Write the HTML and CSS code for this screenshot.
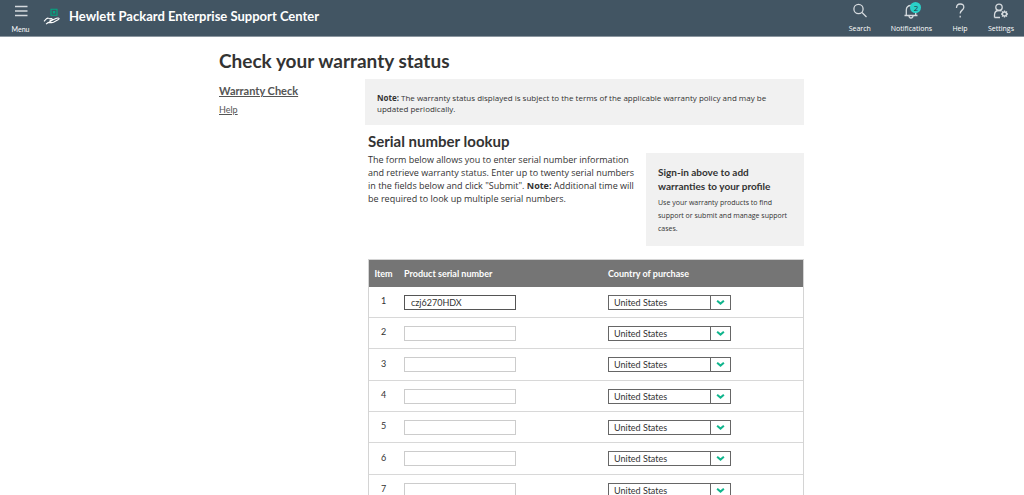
FILE: index.html
```
<!DOCTYPE html>
<html lang="en">
<head>
<meta charset="utf-8">
<title>Check your warranty status</title>
<link rel="stylesheet" href="styles.css">
</head>
<body>
<header class="topbar">
  <button class="tool menu" type="button">
    <svg class="tool-icon" viewBox="0 0 16 16"><path d="M2 3.500h12.500M2 8h12.500M2 12.500h12.500"/></svg>
    <span>Menu</span>
  </button>
  <a class="brand" href="#">
    <svg class="brand-icon" viewBox="0 0 17 17">
      <path class="brand-box" d="M8 1.200h6v6H8zM10.400 3.500h1.300v1.400h-1.300z"/>
      <path class="brand-hand" d="M1 13.300l2.500-2.600q1-.8 2-.5l3 .3q1.300.4.500 1.600H6.500M9.500 12l4-1.700q2-.7 2.500 0t-1 1.400l-4.500 2.500q-1 .5-2 .4H5l-2 1.500z"/>
    </svg>
    <span>Hewlett Packard Enterprise Support Center</span>
  </a>
  <nav class="tools">
    <button class="tool" type="button">
      <svg class="tool-icon" viewBox="0 0 16 16"><circle cx="6.500" cy="6" r="4.600"/><path d="M10 9.500l4.500 4.500"/></svg>
      <span>Search</span>
    </button>
    <button class="tool" type="button">
      <svg class="tool-icon" viewBox="0 0 16 16"><path d="M1.500 12.500h13M3.300 12.500V7q0-4.500 4.700-4.500T12.700 7v5.500M6 12.500q0 2.500 2 2.500t2-2.500"/></svg>
      <span>Notifications</span>
      <span class="badge">2</span>
    </button>
    <button class="tool" type="button">
      <svg class="tool-icon" viewBox="0 0 16 16"><path d="M4.500 5q0-4 3.700-4t3.600 3.300c0 3-3.600 2.700-3.600 6.200M8.200 12.800v1.700"/></svg>
      <span>Help</span>
    </button>
    <button class="tool" type="button">
      <svg class="tool-icon" viewBox="0 0 16 16"><circle cx="6" cy="4.300" r="3.200"/><path d="M1.500 14.500v-2.500q0-4.500 4.500-4.500 1.500 0 2.500.5M1.500 14.500H7"/><circle cx="11.500" cy="11" r="2"/><path d="M11.500 7.500v1.500M11.500 13v1.500M8 11h1.500M13.500 11H15M9 8.500l1 1M13 12.500l1 1M14 8.500l-1 1M10 12.500l-1 1"/></svg>
      <span>Settings</span>
    </button>
  </nav>
</header>

<div class="page">
  <h1>Check your warranty status</h1>
  <div class="columns">
    <nav class="side">
      <a class="current" href="#">Warranty Check</a>
      <a href="#">Help</a>
    </nav>
    <main class="content">
      <p class="note"><b>Note:</b> The warranty status displayed is subject to the terms of the applicable warranty policy and may be<br>updated periodically.</p>
      <div class="lookup">
        <div class="intro">
          <section class="intro-text">
            <h2>Serial number lookup</h2>
            <p>The form below allows you to enter serial number information<br>and retrieve warranty status. Enter up to twenty serial numbers<br>in the fields below and click "Submit". <b>Note:</b> Additional time will<br>be required to look up multiple serial numbers.</p>
          </section>
          <aside class="signin">
            <h3>Sign-in above to add<br>warranties to your profile</h3>
            <p>Use your warranty products to find<br>support or submit and manage support<br>cases.</p>
          </aside>
        </div>
        <table class="serials">
          <thead><tr><th class="item">Item</th><th class="serial">Product serial number</th><th>Country of purchase</th></tr></thead>
          <tbody>
            <tr><td class="item">1</td><td><input class="field" aria-label="Product serial number 1" value="czj6270HDX" autofocus></td><td><span class="pick"><select aria-label="Country of purchase 1"><option>United States</option></select><svg viewBox="0 0 8 6"><path d="M1 1.500l3 2.500 3-2.500"/></svg></span></td></tr>
            <tr><td class="item">2</td><td><input class="field" aria-label="Product serial number 2"></td><td><span class="pick"><select aria-label="Country of purchase 2"><option>United States</option></select><svg viewBox="0 0 8 6"><path d="M1 1.500l3 2.500 3-2.500"/></svg></span></td></tr>
            <tr><td class="item">3</td><td><input class="field" aria-label="Product serial number 3"></td><td><span class="pick"><select aria-label="Country of purchase 3"><option>United States</option></select><svg viewBox="0 0 8 6"><path d="M1 1.500l3 2.500 3-2.500"/></svg></span></td></tr>
            <tr><td class="item">4</td><td><input class="field" aria-label="Product serial number 4"></td><td><span class="pick"><select aria-label="Country of purchase 4"><option>United States</option></select><svg viewBox="0 0 8 6"><path d="M1 1.500l3 2.500 3-2.500"/></svg></span></td></tr>
            <tr><td class="item">5</td><td><input class="field" aria-label="Product serial number 5"></td><td><span class="pick"><select aria-label="Country of purchase 5"><option>United States</option></select><svg viewBox="0 0 8 6"><path d="M1 1.500l3 2.500 3-2.500"/></svg></span></td></tr>
            <tr><td class="item">6</td><td><input class="field" aria-label="Product serial number 6"></td><td><span class="pick"><select aria-label="Country of purchase 6"><option>United States</option></select><svg viewBox="0 0 8 6"><path d="M1 1.500l3 2.500 3-2.500"/></svg></span></td></tr>
            <tr><td class="item">7</td><td><input class="field" aria-label="Product serial number 7"></td><td><span class="pick"><select aria-label="Country of purchase 7"><option>United States</option></select><svg viewBox="0 0 8 6"><path d="M1 1.500l3 2.500 3-2.500"/></svg></span></td></tr>
          </tbody>
        </table>
      </div>
    </main>
  </div>
</div>
</body>
</html>
```
FILE: styles.css
```
* { box-sizing: border-box; }
body {
  margin: 0;
  background: #fff;
  color: #333;
  font: 9px/13px Lato, "Open Sans", sans-serif;
}
h1, h2, h3, p { margin: 0; }
p { font-family: "Open Sans", Lato, sans-serif; }
button, input, select { font: inherit; color: inherit; }

.topbar {
  display: flex;
  align-items: flex-start;
  height: 37px;
  background: #425563;
  border-bottom: 1px solid #8b969f;
  color: #fff;
}
.tool {
  position: relative;
  display: flex;
  flex-direction: column;
  align-items: center;
  gap: 4px;
  padding: 3px 0 0;
  border: 0;
  background: none;
  color: #fff;
  font-size: 7px;
  line-height: 12px;
}
.tool-icon {
  width: 16px;
  height: 16px;
  fill: none;
  stroke: #d5dade;
  stroke-width: 1.3;
}
.menu { width: 41px; }
.brand {
  display: flex;
  align-items: center;
  gap: 9px;
  padding: 8px 0 0 2px;
  color: #fff;
  font-size: 13px;
  line-height: 17px;
  font-weight: 700;
  text-decoration: none;
}
.brand-icon { width: 17px; height: 17px; fill: none; }
.brand-box { stroke: #01a982; stroke-width: 1.1; }
.brand-hand { stroke: #fff; stroke-width: 1.1; }
.tools {
  display: flex;
  gap: 20px;
  margin: 0 10px 0 auto;
  font-family: "Open Sans", Lato, sans-serif;
}
.badge {
  position: absolute;
  top: 2px;
  left: calc(50% - 1px);
  width: 11px;
  height: 11px;
  border-radius: 50%;
  background: #2ad2c9;
  color: #263540;
  font-size: 8px;
  line-height: 11px;
  text-align: center;
}

.page { max-width: 586px; margin: 0 auto; padding-right: 1px; }
h1 {
  padding-top: 11px;
  font-size: 19px;
  line-height: 25px;
}
.columns { display: flex; padding-top: 6px; }
.side {
  display: flex;
  flex: 0 0 146px;
  flex-direction: column;
  align-items: flex-start;
  gap: 6px;
  padding-top: 5px;
}
.side a { color: #555; }
.side .current { font-size: 11px; font-weight: 700; }
.content { flex: 1; min-width: 0; }
.note {
  padding: 13px 12px 11px;
  background: #f1f1f1;
  font-size: 8px;
  line-height: 11px;
}
.lookup { padding: 7px 0 0 3px; }
.intro { display: flex; justify-content: space-between; }
.intro-text { white-space: nowrap; }
h2 { padding-bottom: 2px; font-size: 15px; line-height: 19px; }
.intro-text p { line-height: 13px; }
.signin {
  width: 158px;
  margin: 21px 0 13px;
  padding: 12px 12px 11px;
  background: #f1f1f1;
  white-space: nowrap;
}
h3 { padding-bottom: 3px; font-size: 10px; line-height: 14px; }
.signin p { font-size: 7px; line-height: 13px; }

.serials {
  width: 100%;
  border: 1px solid #d4d4d4;
  border-spacing: 0;
}
th {
  height: 27px;
  padding: 0;
  background: #757575;
  color: #fff;
  font-size: 9px;
  text-align: left;
}
td {
  height: 31px;
  padding: 0;
  border-bottom: 1px solid #d8d8d8;
}
tr:nth-child(3n) td { height: 32px; }
.item { width: 35px; padding-right: 6px; text-align: center; }
td.item { padding-bottom: 3px; }
.serial { width: 204px; }
.field {
  display: block;
  width: 112px;
  height: 15px;
  padding: 0 6px;
  border: 1px solid #ccc;
  outline: 0;
  background: #fff;
}
.field:focus { border-color: #555; }
.pick {
  display: grid;
  grid-template-columns: 102px 21px;
  align-items: center;
  width: 123px;
}
.pick select {
  grid-area: 1 / 1 / 2 / 3;
  width: 100%;
  height: 15px;
  padding: 0 5px;
  border: 1px solid #666;
  border-radius: 0;
  background: linear-gradient(#666, #666) 101px 0 / 1px 100% no-repeat #fff;
  appearance: none;
}
.pick svg {
  grid-area: 1 / 2;
  justify-self: center;
  width: 9px;
  height: 7px;
  fill: none;
  stroke: #10b58d;
  stroke-width: 1.8;
  pointer-events: none;
}
```
